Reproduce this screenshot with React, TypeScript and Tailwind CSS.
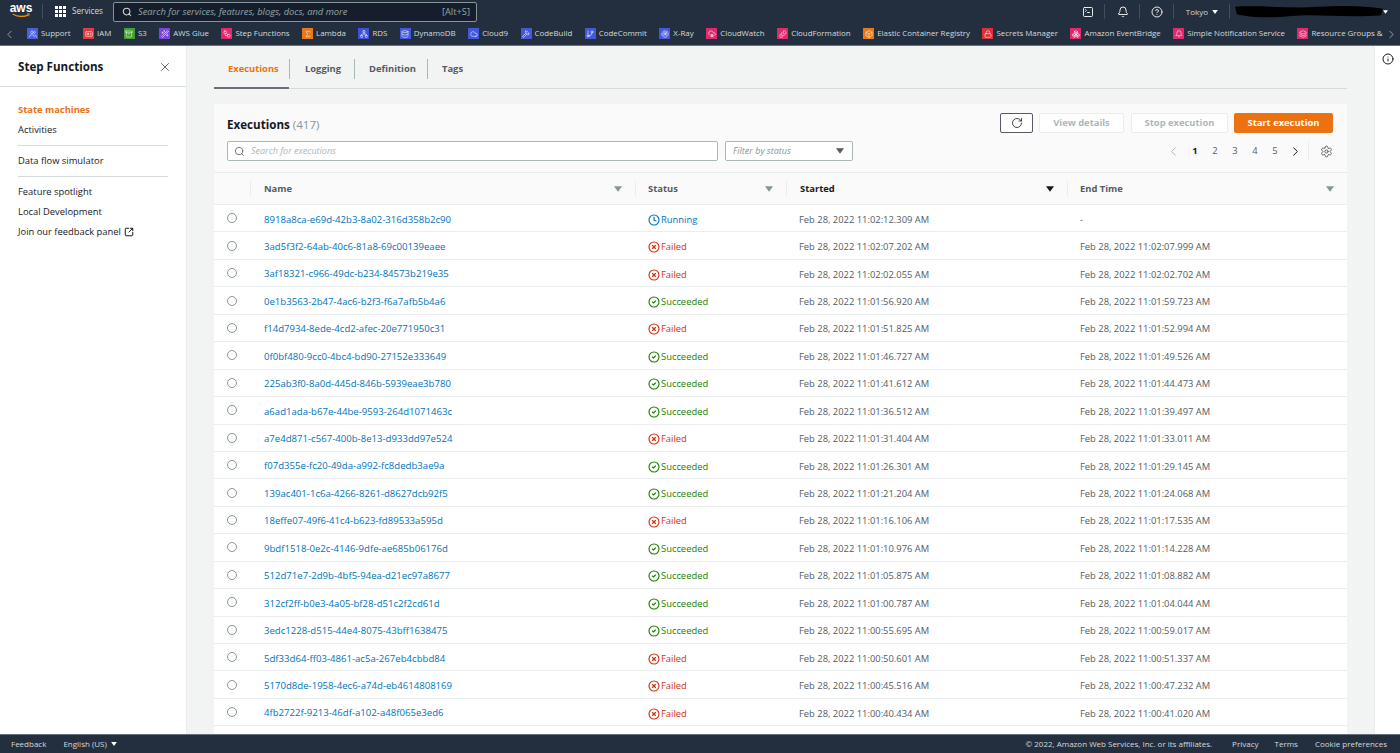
import React from "react";
import {
  Search, X, RotateCw, Settings, ChevronLeft, ChevronRight, Bell, CircleHelp, SquareTerminal,
  SquareArrowOutUpRight, Clock, CircleX, CircleCheck, Users, IdCard, Archive, Wand2, Workflow,
  Sigma, Database, Boxes, Cloud, Hammer, GitBranch, Radar, CloudCog, FileStack, Box, Lock,
  Network, Bell as BellIcon, Layers, Info,
} from "lucide-react";

const favs: [string, string, React.ComponentType<any>][] = [
  ["Support", "bg-[#4a5fe0]", Users],
  ["IAM", "bg-[#e03a3e]", IdCard],
  ["S3", "bg-[#44a02e]", Archive],
  ["AWS Glue", "bg-[#7a45d8]", Wand2],
  ["Step Functions", "bg-[#e2296f]", Workflow],
  ["Lambda", "bg-[#e8761c]", Sigma],
  ["RDS", "bg-[#3f51d8]", Network],
  ["DynamoDB", "bg-[#4458dc]", Database],
  ["Cloud9", "bg-[#4458dc]", Cloud],
  ["CodeBuild", "bg-[#4458dc]", Hammer],
  ["CodeCommit", "bg-[#4458dc]", GitBranch],
  ["X-Ray", "bg-[#4458dc]", Radar],
  ["CloudWatch", "bg-[#de2a6c]", CloudCog],
  ["CloudFormation", "bg-[#de2a6c]", FileStack],
  ["Elastic Container Registry", "bg-[#e8791a]", Box],
  ["Secrets Manager", "bg-[#dc3038]", Lock],
  ["Amazon EventBridge", "bg-[#de2a6c]", Boxes],
  ["Simple Notification Service", "bg-[#de2a6c]", BellIcon],
  ["Resource Groups &", "bg-[#de2a6c]", Layers],
];

type S = "R" | "F" | "S";
const rows: [string, S, string, string][] = [
  ["8918a8ca-e69d-42b3-8a02-316d358b2c90", "R", "11:02:12.309", "-"],
  ["3ad5f3f2-64ab-40c6-81a8-69c00139eaee", "F", "11:02:07.202", "11:02:07.999"],
  ["3af18321-c966-49dc-b234-84573b219e35", "F", "11:02:02.055", "11:02:02.702"],
  ["0e1b3563-2b47-4ac6-b2f3-f6a7afb5b4a6", "S", "11:01:56.920", "11:01:59.723"],
  ["f14d7934-8ede-4cd2-afec-20e771950c31", "F", "11:01:51.825", "11:01:52.994"],
  ["0f0bf480-9cc0-4bc4-bd90-27152e333649", "S", "11:01:46.727", "11:01:49.526"],
  ["225ab3f0-8a0d-445d-846b-5939eae3b780", "S", "11:01:41.612", "11:01:44.473"],
  ["a6ad1ada-b67e-44be-9593-264d1071463c", "S", "11:01:36.512", "11:01:39.497"],
  ["a7e4d871-c567-400b-8e13-d933dd97e524", "F", "11:01:31.404", "11:01:33.011"],
  ["f07d355e-fc20-49da-a992-fc8dedb3ae9a", "S", "11:01:26.301", "11:01:29.145"],
  ["139ac401-1c6a-4266-8261-d8627dcb92f5", "S", "11:01:21.204", "11:01:24.068"],
  ["18effe07-49f6-41c4-b623-fd89533a595d", "F", "11:01:16.106", "11:01:17.535"],
  ["9bdf1518-0e2c-4146-9dfe-ae685b06176d", "S", "11:01:10.976", "11:01:14.228"],
  ["512d71e7-2d9b-4bf5-94ea-d21ec97a8677", "S", "11:01:05.875", "11:01:08.882"],
  ["312cf2ff-b0e3-4a05-bf28-d51c2f2cd61d", "S", "11:01:00.787", "11:01:04.044"],
  ["3edc1228-d515-44e4-8075-43bff1638475", "S", "11:00:55.695", "11:00:59.017"],
  ["5df33d64-ff03-4861-ac5a-267eb4cbbd84", "F", "11:00:50.601", "11:00:51.337"],
  ["5170d8de-1958-4ec6-a74d-eb4614808169", "F", "11:00:45.516", "11:00:47.232"],
  ["4fb2722f-9213-46df-a102-a48f065e3ed6", "F", "11:00:40.434", "11:00:41.020"],
];

const Caret = ({ className }: { className: string }) => (
  <svg viewBox="0 0 10 7" className={className} fill="currentColor"><path d="M0 0h10L5 7z" /></svg>
);

const Divider = () => <span className="block w-px h-[15px] bg-[#414d5c]" />;

function Status({ s }: { s: S }) {
  if (s === "R") return <span className="flex items-center gap-[1px] text-[#0073bb]"><Clock size={12} strokeWidth={2.3} />Running</span>;
  if (s === "F") return <span className="flex items-center gap-[1px] text-[#d13212]"><CircleX size={12} strokeWidth={2.3} />Failed</span>;
  return <span className="flex items-center gap-[1px] text-[#1d8102]"><CircleCheck size={12} strokeWidth={2.3} />Succeeded</span>;
}

function Head({ label, active, tight }: { label: string; active?: boolean; tight?: boolean }) {
  return (
    <div className={`flex items-center justify-between h-[15px] border-l border-[#eaeded] pr-[13px] ${tight ? "pl-[12px]" : "pl-[13px]"}`}>
      <span className={active ? "pt-[1px] font-bold text-[#16191f]" : "pt-[1px] font-bold text-[#545b64]"}>{label}</span>
      <Caret className={active ? "w-[8px] h-[6px] text-[#16191f]" : "w-[8px] h-[6px] text-[#879596]"} />
    </div>
  );
}

const cols = "grid grid-cols-[36px_385px_151px_281px_1fr] items-center";

export default function App() {
  return (
    <div className="w-[1400px] h-[753px] overflow-hidden flex flex-col bg-[#f2f3f3] font-['Open_Sans','Noto_Sans',sans-serif] text-[#545b64] text-[9.4px]">
      <header className="h-[46px] shrink-0 bg-[#232f3e] border-b border-[#687078] text-[#d5dbdb]">
        <div className="h-[23px] flex items-center">
          <div className="ml-[10px] w-[22px] shrink-0 flex flex-col items-center text-white">
            <span className="font-['Liberation_Sans',sans-serif] font-bold text-[12px] leading-[9px] -mt-[2px]">aws</span>
            <svg viewBox="0 0 22 6" className="w-[22px] h-[5px]"><path d="M1 1c5 4 14 4 19 1" stroke="#ff9900" strokeWidth="1.4" fill="none" /><path d="M18 1l3 0-1 3" stroke="#ff9900" strokeWidth="1" fill="none" /></svg>
          </div>
          <span className="ml-[10px] shrink-0 w-px h-[15px] bg-[#414d5c]" />
          <div className="ml-[12px] shrink-0 grid grid-cols-3 gap-[1px] w-[11px]">
            {Array.from({ length: 9 }).map((_, i) => <span key={i} className="w-[3px] h-[3px] bg-white" />)}
          </div>
          <span className="ml-[6px] w-[29px] shrink-0 text-[8.2px] whitespace-nowrap">Services</span>
          <div className="ml-[12px] shrink-0 w-[364px] h-[20px] flex items-center bg-[#161e2d] border border-[#879596] rounded-[2px] px-[7px] text-[9.3px]">
            <Search size={10} className="text-[#d5dbdb] ml-[1px]" strokeWidth={2.5} />
            <span className="ml-[6px] italic text-[#95a5a6]">Search for services, features, blogs, docs, and more</span>
            <span className="ml-auto mr-[-1px] text-[#95a5a6]">[Alt+S]</span>
          </div>
          <div className="ml-auto flex items-center">
            <SquareTerminal size={12} strokeWidth={1.8} className="text-white" />
            <span className="ml-[10px]"><Divider /></span>
            <Bell size={12} strokeWidth={1.8} className="ml-[12px] text-white" />
            <span className="ml-[10px]"><Divider /></span>
            <CircleHelp size={12} strokeWidth={1.8} className="ml-[11px] text-white" />
            <span className="ml-[10px]"><Divider /></span>
            <span className="ml-[12px] text-[8px]">Tokyo</span>
            <Caret className="ml-[4px] w-[6px] h-[4px] text-white" />
            <span className="ml-[11px]"><Divider /></span>
            <svg viewBox="0 0 160 14" preserveAspectRatio="none" className="ml-[5px] w-[148px] h-[13px]"><path d="M0 2c30-2 60 2 90 0s50-1 70 2l-2 7c-40 3-70-2-100 1S10 12 2 10z" fill="#000" /></svg>
            <Caret className="mr-[12px] w-[5px] h-[4px] text-white" />
          </div>
        </div>
        <div className="h-[22px] flex items-center">
          <ChevronLeft size={13} strokeWidth={1.5} className="shrink-0 ml-[3px] mr-[11px] text-[#aab7b8]" />
          <div className="flex-1 min-w-0 overflow-hidden flex items-center gap-[12.5px] whitespace-nowrap">
            {favs.map(([n, c, I]) => (
              <span key={n} className="shrink-0 flex items-center gap-[3px] text-[7.9px]">
                <span className={`w-[11px] h-[11px] flex items-center justify-center ${c}`}><I size={8} className="text-white" strokeWidth={1.6} /></span>
                {n}
              </span>
            ))}
          </div>
          <ChevronRight size={13} strokeWidth={1.5} className="shrink-0 mr-[2px] text-[#aab7b8]" />
        </div>
      </header>

      <div className="flex-1 min-h-0 flex">
        <aside className="w-[187px] shrink-0 bg-white border-r border-[#eaeded]">
          <div className="h-[41px] flex items-center justify-between pl-[18px] pr-[14px] pt-[1px] border-b border-[#d5dbdb]">
            <span className="font-bold text-[11.6px] text-[#16191f]">Step Functions</span>
            <X size={14} strokeWidth={1.5} />
          </div>
          <nav className="px-[18px] pt-[13px] text-[9.4px] leading-[20px] text-[#16191f]">
            <div className="font-bold text-[#ec7211]">State machines</div>
            <div>Activities</div>
            <div className="h-px bg-[#d5dbdb] my-[5px]" />
            <div>Data flow simulator</div>
            <div className="h-px bg-[#d5dbdb] my-[5px]" />
            <div>Feature spotlight</div>
            <div>Local Development</div>
            <div className="flex items-center gap-[3px]">Join our feedback panel <SquareArrowOutUpRight size={10} strokeWidth={2.4} /></div>
          </nav>
        </aside>

        <main className="w-[1187px] shrink-0 pl-[27px] pr-[27px] overflow-hidden">
          <div className="h-[43px] flex items-start border-b border-[#d5dbdb] font-bold">
            <div className="h-[43px] w-[75px] pl-[14px] pt-[13px] leading-[20px] border-b-2 border-[#687078] text-[#ec7211]">Executions</div>
            <div className="mt-[13px] w-[65px] h-[20px] border-l border-[#aab7b8] pl-[15px] leading-[20px]">Logging</div>
            <div className="mt-[13px] w-[73px] h-[20px] border-l border-[#aab7b8] pl-[14px] leading-[20px]">Definition</div>
            <div className="mt-[13px] h-[20px] border-l border-[#aab7b8] pl-[14px] leading-[20px]">Tags</div>
          </div>

          <section className="mt-[15px] pb-[20px] bg-white">
            <div className="h-[68px] bg-[#fafafa] px-[13px] pt-[9px] pr-[14px]">
              <div className="flex items-center h-[20px]">
                <span className="pt-[3px] font-bold text-[11.6px] text-[#16191f]">Executions <span className="font-normal text-[#879596]">(417)</span></span>
                <button className="ml-auto w-[33px] h-[20px] flex items-center justify-center border border-[#545b64] rounded-[2px] bg-white text-[#16191f]"><RotateCw size={12} strokeWidth={1.6} /></button>
                <button className="ml-[6px] w-[85px] h-[20px] border border-[#eaeded] rounded-[2px] bg-white font-bold text-[#aab7b8]">View details</button>
                <button className="ml-[7px] w-[97px] h-[20px] border border-[#eaeded] rounded-[2px] bg-white font-bold text-[#aab7b8]">Stop execution</button>
                <button className="ml-[6px] w-[99px] h-[20px] rounded-[2px] bg-[#ec7211] font-bold text-white">Start execution</button>
              </div>
              <div className="flex items-center h-[20px] mt-[8px]">
                <div className="w-[491px] h-[20px] flex items-center border border-[#aab7b8] rounded-[2px] bg-white px-[6px]">
                  <Search size={11} strokeWidth={1.8} />
                  <span className="ml-[6px] italic text-[#aab7b8] text-[9px]">Search for executions</span>
                </div>
                <div className="ml-[7px] w-[128px] h-[20px] flex items-center justify-between border border-[#aab7b8] rounded-[2px] bg-white pl-[7px] pr-[8px]">
                  <span className="italic text-[#879596] text-[9px]">Filter by status</span>
                  <Caret className="w-[8px] h-[6px] text-[#545b64]" />
                </div>
                <div className="ml-auto flex items-center">
                  <ChevronLeft size={15} strokeWidth={1.6} className="text-[#aab7b8] mr-[4px]" />
                  <span className="w-[20px] text-center font-bold text-[#16191f]">1</span>
                  <span className="w-[20px] text-center">2</span>
                  <span className="w-[20px] text-center">3</span>
                  <span className="w-[20px] text-center">4</span>
                  <span className="w-[20px] text-center">5</span>
                  <ChevronRight size={15} strokeWidth={1.6} className="ml-[3px] text-[#16191f]" />
                  <span className="ml-[5px] w-px h-[20px] bg-[#eaeded]" />
                  <Settings size={13} strokeWidth={1.8} className="ml-[11px]" />
                </div>
              </div>
            </div>
            <div className={`${cols} h-[33px] bg-[#fafafa] border-y border-[#eaeded]`}>
              <span />
              <Head label="Name" />
              <Head label="Status" tight />
              <Head label="Started" active />
              <Head label="End Time" tight />
            </div>
            {rows.map(([id, s, start, end]) => (
              <div key={id} className={`${cols} h-[27.44px] border-b border-[#eaeded]`}>
                <span className="ml-[13px] w-[10px] h-[10px] rounded-full border border-[#879596] bg-white" />
                <span className="pl-[14px] pt-[3px] text-[9.6px] text-[#0073bb]">{id}</span>
                <span className="pl-[13px] pt-[3px]"><Status s={s} /></span>
                <span className="pl-[13px] pt-[3px]">Feb 28, 2022 {start} AM</span>
                <span className="pl-[13px] pt-[3px]">{end === "-" ? "-" : `Feb 28, 2022 ${end} AM`}</span>
              </div>
            ))}
          </section>
        </main>

        <aside className="flex-1 bg-white border-l border-[#eaeded] flex justify-center pt-[7px]">
          <Info size={12} strokeWidth={2} className="text-[#16191f]" />
        </aside>
      </div>

      <footer className="h-[19px] shrink-0 bg-[#232f3e] border-t border-[#687078] flex items-center text-[#d5dbdb] text-[8px]">
        <span className="ml-[11px]">Feedback</span>
        <span className="ml-[17px]">English (US)</span>
        <Caret className="ml-[4px] w-[6px] h-[4px] text-white" />
        <span className="ml-auto">© 2022, Amazon Web Services, Inc. or its affiliates.</span>
        <span className="ml-[20px]">Privacy</span>
        <span className="ml-[16px]">Terms</span>
        <span className="ml-[17px] mr-[13px]">Cookie preferences</span>
      </footer>
    </div>
  );
}
